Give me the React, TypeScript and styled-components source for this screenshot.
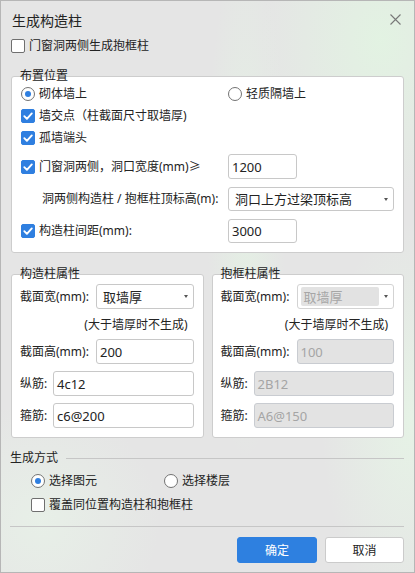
import React from 'react';
import styled, { createGlobalStyle } from 'styled-components';

const GlobalStyle = createGlobalStyle`
  html, body {
    margin: 0;
    padding: 0;
  }
  body {
    font-family: "Noto Sans", "Noto Sans CJK SC", sans-serif;
    font-size: 12px;
    color: #232323;
  }
  * {
    box-sizing: border-box;
  }
`;

const blue = '#2f7fe0';

const Dialog = styled.div`
  width: 415px;
  height: 573px;
  border: 1px solid #b6b6b6;
  padding: 0 10px;
  display: flex;
  flex-direction: column;
  background:
    radial-gradient(ellipse 120px 160px at 380px 40px, rgba(226, 244, 226, 0.9), transparent),
    radial-gradient(ellipse 40px 260px at 245px 200px, rgba(228, 242, 228, 0.8), transparent),
    radial-gradient(ellipse 120px 120px at 40px 520px, rgba(232, 242, 232, 0.8), transparent),
    radial-gradient(ellipse 90px 200px at 410px 420px, rgba(230, 244, 230, 0.9), transparent),
    #e5e5e5;
`;

const TitleBar = styled.div`
  height: 34px;
  padding: 6px 3px 0 1px;
  display: flex;
  align-items: center;
  justify-content: space-between;
`;

const Title = styled.div`
  font-size: 14px;
  line-height: 18px;
`;

const Close = styled.svg`
  width: 11px;
  height: 11px;
  margin-top: -3px;
`;

const Row = styled.div<{ $h?: number; $mt?: number; $indent?: number }>`
  display: flex;
  align-items: center;
  height: ${p => p.$h ?? 22}px;
  margin-top: ${p => p.$mt ?? 0}px;
  padding-left: ${p => p.$indent ?? 0}px;
`;

const Option = styled.label<{ $w?: number }>`
  display: flex;
  align-items: center;
  gap: 4px;
  line-height: 16px;
  white-space: nowrap;
  width: ${p => (p.$w ? `${p.$w}px` : 'auto')};
  flex: none;
`;

const Box = styled.span<{ $checked?: boolean }>`
  width: 14px;
  height: 14px;
  border-radius: 2px;
  flex: none;
  display: flex;
  align-items: center;
  justify-content: center;
  background: ${p => (p.$checked ? blue : '#fff')};
  border: 1px solid ${p => (p.$checked ? blue : '#6f6f6f')};
`;

const Circle = styled.span<{ $checked?: boolean }>`
  width: 14px;
  height: 14px;
  border-radius: 50%;
  flex: none;
  background: #fff;
  border: 1px solid #737373;
  display: flex;
  align-items: center;
  justify-content: center;
  &::after {
    content: '';
    width: 6px;
    height: 6px;
    border-radius: 50%;
    background: ${p => (p.$checked ? blue : 'transparent')};
  }
`;

const Group = styled.div<{ $mt?: number }>`
  margin-top: ${p => p.$mt ?? 0}px;
  display: flex;
  flex-direction: column;
  min-width: 0;
`;

const Caption = styled.div`
  line-height: 14px;
  padding-left: 9px;
  margin-bottom: -7px;
  position: relative;
  z-index: 1;
  font-size: 12px;
`;

const Panel = styled.div<{ $pad: string }>`
  background: #fff;
  border: 1px solid #cdcdcd;
  border-radius: 3px;
  padding: ${p => p.$pad};
  display: flex;
  flex-direction: column;
`;

const PlaceRow = styled.div<{ $h?: number; $mt?: number }>`
  display: grid;
  grid-template-columns: 207px 1fr;
  align-items: center;
  height: ${p => p.$h ?? 22}px;
  margin-top: ${p => p.$mt ?? 0}px;
`;

const Plain = styled.div<{ $indent?: number }>`
  padding-left: ${p => p.$indent ?? 0}px;
  white-space: nowrap;
  line-height: 16px;
`;

const Input = styled.div<{ $w?: number; $disabled?: boolean; $h?: number }>`
  height: ${p => p.$h ?? 25}px;
  width: ${p => (p.$w ? `${p.$w}px` : 'auto')};
  flex: ${p => (p.$w ? 'none' : '1')};
  border: 1px solid ${p => (p.$disabled ? '#c9ccd1' : '#c8c8c8')};
  border-radius: 3px;
  background: ${p => (p.$disabled ? '#e3e3e3' : '#fff')};
  color: ${p => (p.$disabled ? '#a5a5a5' : '#232323')};
  padding-left: 3px;
  display: flex;
  align-items: center;
  font-size: 13px;
  line-height: 16px;
`;

const Select = styled.div<{ $disabled?: boolean; $h?: number }>`
  height: ${p => p.$h ?? 25}px;
  flex: 1;
  min-width: 0;
  border: 1px solid ${p => (p.$disabled ? '#d3d3d3' : '#c8c8c8')};
  border-radius: 3px;
  background: #fff;
  display: flex;
  align-items: center;
  padding: ${p => (p.$disabled ? '2px 0 2px 3px' : '0 0 0 6px')};
  font-size: 13px;
  line-height: 16px;
`;

const SelectValue = styled.div<{ $disabled?: boolean }>`
  flex: 1;
  height: 100%;
  display: flex;
  align-items: center;
  border-radius: 2px;
  padding-left: ${p => (p.$disabled ? '3px' : '0')};
  background: ${p => (p.$disabled ? '#e2e2e2' : 'transparent')};
  color: ${p => (p.$disabled ? '#a6a6a6' : '#232323')};
`;

const Arrow = styled.span`
  width: 14px;
  flex: none;
  display: flex;
  justify-content: center;
  &::after {
    content: '';
    border-left: 2.5px solid transparent;
    border-right: 2.5px solid transparent;
    border-top: 3px solid #555;
  }
`;

const Columns = styled.div`
  margin-top: 14px;
  display: grid;
  grid-template-columns: 1fr 1fr;
  gap: 8px;
`;

const Field = styled.div<{ $h?: number; $mt?: number }>`
  display: flex;
  align-items: center;
  height: ${p => p.$h ?? 25}px;
  margin-top: ${p => p.$mt ?? 0}px;
`;

const FieldLabel = styled.div<{ $w: number }>`
  width: ${p => p.$w}px;
  flex: none;
  white-space: nowrap;
  line-height: 16px;
`;

const Note = styled.div`
  height: 30px;
  display: flex;
  align-items: center;
  justify-content: flex-end;
  padding-right: 6px;
  padding-bottom: 1px;
  white-space: nowrap;
`;

const SectionHead = styled.div`
  margin-top: 13px;
  margin-left: -1px;
  display: flex;
  align-items: center;
  gap: 8px;
  line-height: 14px;
  &::after {
    content: '';
    flex: 1;
    height: 1px;
    background: #c6c6c6;
  }
`;

const Separator = styled.div`
  margin: 10px 0 0 -1px;
  height: 1px;
  background: #c6c6c6;
`;

const Footer = styled.div`
  margin-top: 10px;
  display: flex;
  justify-content: flex-end;
  gap: 8px;
`;

const Button = styled.button<{ $primary?: boolean }>`
  height: 26px;
  width: ${p => (p.$primary ? 80 : 79)}px;
  border-radius: 3px;
  font-family: inherit;
  font-size: 12px;
  border: 1px solid ${p => (p.$primary ? '#2e80e0' : '#cbcbcb')};
  background: ${p => (p.$primary ? '#2e80e0' : '#fff')};
  color: ${p => (p.$primary ? '#fff' : '#232323')};
  padding: 0;
`;

function CheckBox({ checked }: { checked?: boolean }) {
  return (
    <Box $checked={checked}>
      {checked && (
        <svg width="12" height="12" viewBox="0 0 12 12">
          <path d="M2.3 6.2 L4.9 8.8 L9.8 3.4" stroke="#fff" strokeWidth="1.9" fill="none" strokeLinecap="round" strokeLinejoin="round" />
        </svg>
      )}
    </Box>
  );
}

function Check({ checked, children, w }: { checked?: boolean; children: React.ReactNode; w?: number }) {
  return (
    <Option $w={w}>
      <CheckBox checked={checked} />
      <span>{children}</span>
    </Option>
  );
}

function Radio({ checked, children, w }: { checked?: boolean; children: React.ReactNode; w?: number }) {
  return (
    <Option $w={w}>
      <Circle $checked={checked} />
      <span>{children}</span>
    </Option>
  );
}

function Dropdown({ value, disabled, h }: { value: string; disabled?: boolean; h?: number }) {
  return (
    <Select $disabled={disabled} $h={h}>
      <SelectValue $disabled={disabled}>{value}</SelectValue>
      <Arrow />
    </Select>
  );
}

function PropsPanel({ title, disabled, values }: { title: string; disabled?: boolean; values: string[] }) {
  return (
    <Group>
      <Caption>{title}</Caption>
      <Panel $pad="9px 9px 9px 8px">
        <Field>
          <FieldLabel $w={76}>截面宽(mm):</FieldLabel>
          <Dropdown value={values[0]} disabled={disabled} />
        </Field>
        <Note>(大于墙厚时不生成)</Note>
        <Field>
          <FieldLabel $w={76}>截面高(mm):</FieldLabel>
          <Input $disabled={disabled}>{values[1]}</Input>
        </Field>
        <Field $mt={7}>
          <FieldLabel $w={33}>纵筋:</FieldLabel>
          <Input $disabled={disabled}>{values[2]}</Input>
        </Field>
        <Field $mt={7}>
          <FieldLabel $w={33}>箍筋:</FieldLabel>
          <Input $disabled={disabled}>{values[3]}</Input>
        </Field>
      </Panel>
    </Group>
  );
}

export default function App() {
  return (
    <>
      <GlobalStyle />
      <Dialog>
        <TitleBar>
          <Title>生成构造柱</Title>
          <Close viewBox="0 0 11 11">
            <path d="M0.5 0.5 L10.5 10.5 M10.5 0.5 L0.5 10.5" stroke="#787878" strokeWidth="1.1" />
          </Close>
        </TitleBar>

        <Row>
          <Check>门窗洞两侧生成抱框柱</Check>
        </Row>

        <Group $mt={12}>
          <Caption>布置位置</Caption>
          <Panel $pad="6px 9px 9px 9px">
            <PlaceRow>
              <Radio checked>砌体墙上</Radio>
              <Radio>轻质隔墙上</Radio>
            </PlaceRow>
            <PlaceRow>
              <Check checked>墙交点（柱截面尺寸取墙厚)</Check>
            </PlaceRow>
            <PlaceRow>
              <Check checked>孤墙端头</Check>
            </PlaceRow>
            <PlaceRow $h={25} $mt={5}>
              <Check checked>门窗洞两侧，洞口宽度(mm)≥</Check>
              <Input $w={69}>1200</Input>
            </PlaceRow>
            <PlaceRow $h={24} $mt={8}>
              <Plain $indent={21}>洞两侧构造柱 / 抱框柱顶标高(m):</Plain>
              <Dropdown value="洞口上方过梁顶标高" h={24} />
            </PlaceRow>
            <PlaceRow $h={24} $mt={8}>
              <Check checked>构造柱间距(mm):</Check>
              <Input $w={69} $h={24}>3000</Input>
            </PlaceRow>
          </Panel>
        </Group>

        <Columns>
          <PropsPanel title="构造柱属性" values={['取墙厚', '200', '4c12', 'c6@200']} />
          <PropsPanel title="抱框柱属性" disabled values={['取墙厚', '100', '2B12', 'A6@150']} />
        </Columns>

        <SectionHead>生成方式</SectionHead>
        <Row $mt={5} $indent={20}>
          <Radio checked w={133}>选择图元</Radio>
          <Radio>选择楼层</Radio>
        </Row>
        <Row $mt={2} $indent={20}>
          <Check>覆盖同位置构造柱和抱框柱</Check>
        </Row>

        <Separator />

        <Footer>
          <Button $primary>确定</Button>
          <Button>取消</Button>
        </Footer>
      </Dialog>
    </>
  );
}
